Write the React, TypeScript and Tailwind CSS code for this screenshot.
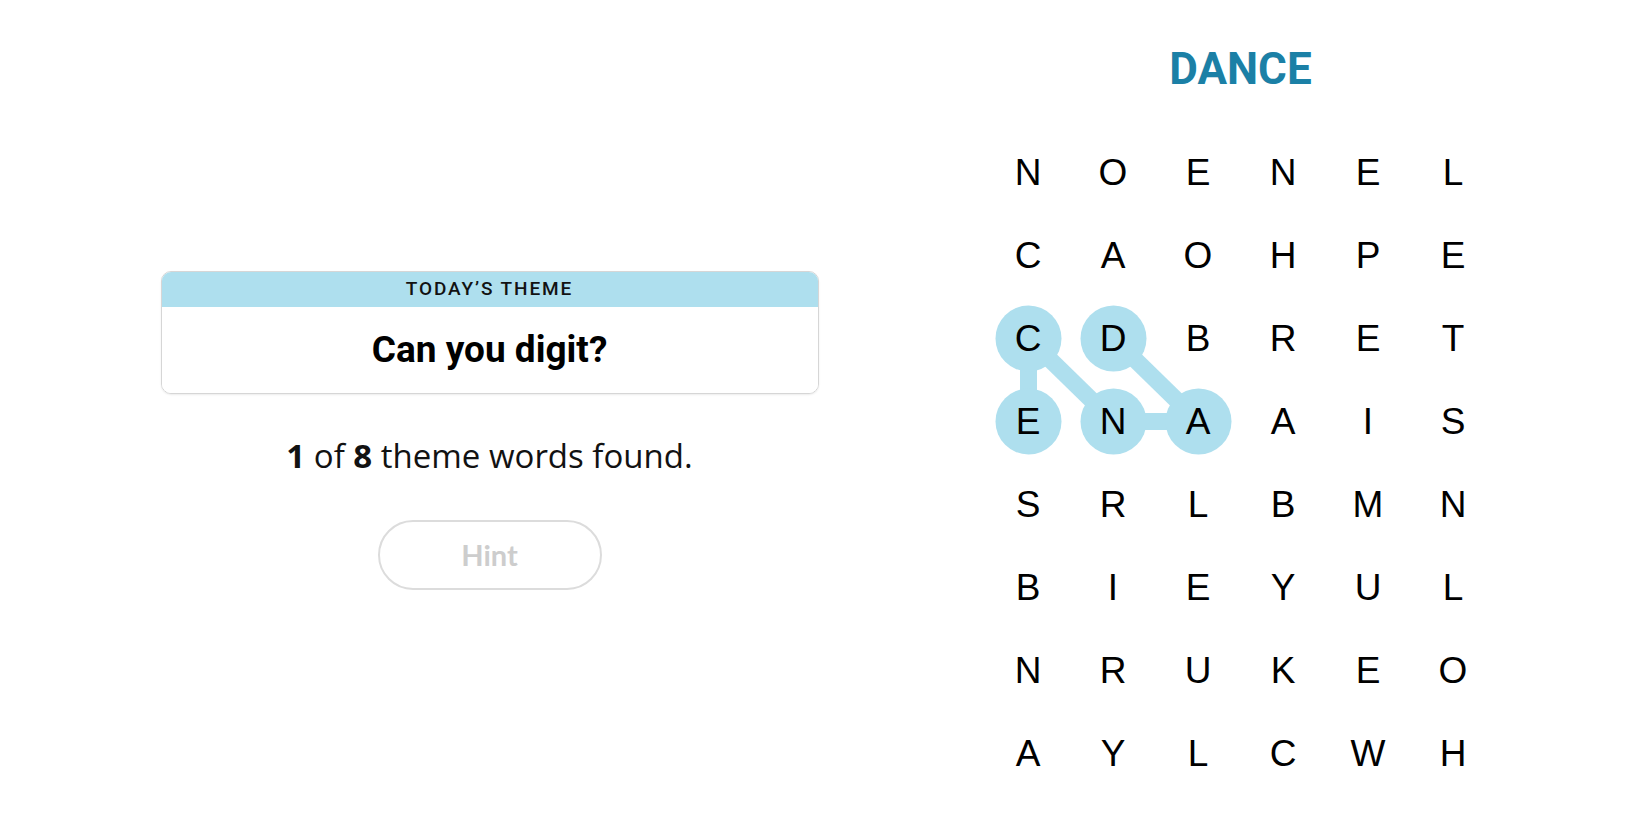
const GRID = [
  ["N", "O", "E", "N", "E", "L"],
  ["C", "A", "O", "H", "P", "E"],
  ["C", "D", "B", "R", "E", "T"],
  ["E", "N", "A", "A", "I", "S"],
  ["S", "R", "L", "B", "M", "N"],
  ["B", "I", "E", "Y", "U", "L"],
  ["N", "R", "U", "K", "E", "O"],
  ["A", "Y", "L", "C", "W", "H"],
];

const CELL_W = 85;
const CELL_H = 83;

// the word currently traced on the board, in order: D-A-N-C-E
const path: [number, number][] = [
  [2, 1],
  [3, 2],
  [3, 1],
  [2, 0],
  [3, 0],
];

function center([row, col]: [number, number]) {
  return { x: CELL_W / 2 + col * CELL_W, y: CELL_H / 2 + row * CELL_H };
}

function SelectionTrail() {
  const points = path.map(center);
  return (
    <svg
      width={CELL_W * 6}
      height={CELL_H * 8}
      className="pointer-events-none absolute left-0 top-0"
      aria-hidden="true"
    >
      {points.slice(1).map((p, i) => (
        <line
          key={i}
          x1={points[i].x}
          y1={points[i].y}
          x2={p.x}
          y2={p.y}
          stroke="#aedfee"
          strokeWidth={17}
        />
      ))}
      {points.map((p, i) => (
        <circle key={i} cx={p.x} cy={p.y} r={33} fill="#aedfee" />
      ))}
    </svg>
  );
}

function ThemeCard() {
  return (
    <div className="w-[658px] overflow-hidden rounded-[10px] border border-[#d6d6d6] shadow-[0_1px_2px_rgba(0,0,0,0.08)]">
      <div className="flex h-[35px] items-center justify-center bg-[#aedfee] font-['Roboto',sans-serif] text-[19px] font-medium tracking-[0.1em] text-[#121212]">
        TODAY’S THEME
      </div>
      <div className="flex h-[86px] items-center justify-center bg-white font-['Roboto',sans-serif] text-[37px] font-bold text-black">
        Can you digit?
      </div>
    </div>
  );
}

export default function App() {
  return (
    <div className="flex h-[825px] w-[1650px] items-start justify-center gap-[167px] bg-white pl-[6px]">
      <div className="mt-[271px] flex w-[658px] flex-col items-center">
        <ThemeCard />
        <p className="mt-[41px] font-['Open_Sans',sans-serif] text-[33px] leading-[42px] text-[#121212]">
          <span className="font-bold">1</span> of{" "}
          <span className="font-bold">8</span> theme words found.
        </p>
        <button
          type="button"
          disabled
          className="mt-[43px] flex h-[70px] w-[224px] items-center justify-center rounded-full border-2 border-[#dcdcdc] bg-white font-['Lato',sans-serif] text-[29px] font-bold text-[#cdcdcd]"
        >
          Hint
        </button>
      </div>

      <div className="mt-[47px] flex w-[510px] flex-col items-center">
        <h1 className="font-['Roboto',sans-serif] text-[44px] font-bold leading-[44px] text-[#1b80a6]">
          DANCE
        </h1>
        <div className="relative mt-[40px]">
          <SelectionTrail />
          <div className="relative grid grid-cols-[repeat(6,85px)] grid-rows-[repeat(8,83px)]">
            {GRID.flatMap((row, r) =>
              row.map((letter, c) => (
                <div
                  key={`${r}-${c}`}
                  className="flex items-center justify-center font-['Liberation_Sans',sans-serif] text-[37px] leading-none text-black"
                >
                  {letter}
                </div>
              ))
            )}
          </div>
        </div>
      </div>
    </div>
  );
}
